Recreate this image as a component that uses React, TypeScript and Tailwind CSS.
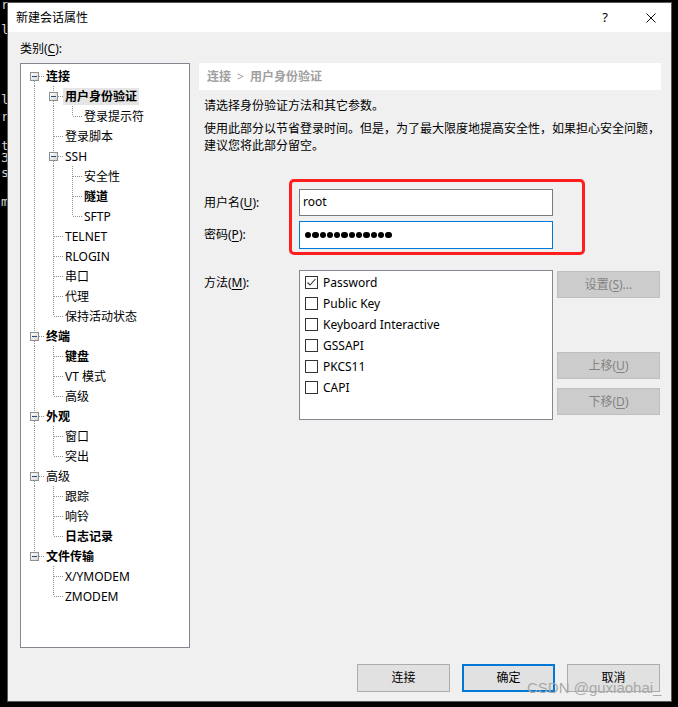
import React from "react";

type TreeNode = { label: string; bold?: boolean; selected?: boolean; children?: TreeNode[] };

const tree: TreeNode[] = [
  {
    label: "连接",
    bold: true,
    children: [
      { label: "用户身份验证", bold: true, selected: true, children: [{ label: "登录提示符" }] },
      { label: "登录脚本" },
      {
        label: "SSH",
        children: [{ label: "安全性" }, { label: "隧道", bold: true }, { label: "SFTP" }],
      },
      { label: "TELNET" },
      { label: "RLOGIN" },
      { label: "串口" },
      { label: "代理" },
      { label: "保持活动状态" },
    ],
  },
  {
    label: "终端",
    bold: true,
    children: [{ label: "键盘", bold: true }, { label: "VT 模式" }, { label: "高级" }],
  },
  { label: "外观", bold: true, children: [{ label: "窗口" }, { label: "突出" }] },
  {
    label: "高级",
    children: [{ label: "跟踪" }, { label: "响铃" }, { label: "日志记录", bold: true }],
  },
  { label: "文件传输", bold: true, children: [{ label: "X/YMODEM" }, { label: "ZMODEM" }] },
];

type Row = {
  node: TreeNode;
  depth: number;
  ancestorsLast: boolean[];
  isLast: boolean;
  isFirstRoot: boolean;
};

function flatten(nodes: TreeNode[], depth: number, ancestorsLast: boolean[], out: Row[]) {
  nodes.forEach((n, i) => {
    const isLast = i === nodes.length - 1;
    out.push({ node: n, depth, ancestorsLast, isLast, isFirstRoot: depth === 0 && i === 0 });
    if (n.children) flatten(n.children, depth + 1, [...ancestorsLast, isLast], out);
  });
}

const rows: Row[] = [];
flatten(tree, 0, [], rows);

const DOT = "#8f8f8f";

function GuideCell({ row, col }: { row: Row; col: number }) {
  const own = col === row.depth;
  const hasBox = own && !!row.node.children;
  // vertical line through an ancestor column
  const passThrough = !own && !row.ancestorsLast[col];
  const top = own && !row.isFirstRoot;
  const bottom = own && !row.isLast;
  return (
    <svg width="19" height="20" className="shrink-0">
      {passThrough && <line x1="9.5" y1="0" x2="9.5" y2="20" stroke={DOT} strokeDasharray="1 1" />}
      {top && <line x1="9.5" y1="0" x2="9.5" y2={hasBox ? 6 : 10} stroke={DOT} strokeDasharray="1 1" />}
      {bottom && <line x1="9.5" y1={hasBox ? 15 : 10} x2="9.5" y2="20" stroke={DOT} strokeDasharray="1 1" />}
      {own && <line x1={hasBox ? 14 : 10} y1="10.5" x2="19" y2="10.5" stroke={DOT} strokeDasharray="1 1" />}
      {hasBox && (
        <g>
          <defs>
            <linearGradient id="exp" x1="0" y1="0" x2="1" y2="1">
              <stop offset="0" stopColor="#ffffff" />
              <stop offset="1" stopColor="#d4d4d4" />
            </linearGradient>
          </defs>
          <rect x="5.5" y="6.5" width="8" height="8" fill="url(#exp)" stroke="#8e8f8f" />
          <line x1="7" y1="10.5" x2="12" y2="10.5" stroke="#2c4c7c" />
        </g>
      )}
    </svg>
  );
}

function TreeRow({ row }: { row: Row }) {
  const cells = [];
  for (let c = 0; c <= row.depth; c++) cells.push(<GuideCell key={c} row={row} col={c} />);
  return (
    <div className="flex h-[20px] items-center">
      {cells}
      <span
        className={`h-[17px] whitespace-nowrap px-[2px] leading-[17px] text-black ${
          row.node.bold ? "font-bold" : ""
        } ${row.node.selected ? "bg-[#e5e5e5]" : ""}`}
      >
        {row.node.label}
      </span>
    </div>
  );
}

function Checkbox({ checked }: { checked?: boolean }) {
  return (
    <svg width="13" height="13" className="shrink-0">
      <rect x="0.5" y="0.5" width="12" height="12" fill="#fff" stroke="#333333" />
      {checked && <path d="M2.5 6.5 L5 9 L10.5 3" fill="none" stroke="#333333" strokeWidth="1.1" />}
    </svg>
  );
}

function DisabledButton({ children, className }: { children: React.ReactNode; className?: string }) {
  return (
    <div
      className={`flex h-[27px] w-[103px] items-center justify-center border border-[#bfbfbf] bg-[#cccccc] text-[#838383] ${
        className ?? ""
      }`}
    >
      {children}
    </div>
  );
}

const methods = [
  { label: "Password", checked: true },
  { label: "Public Key" },
  { label: "Keyboard Interactive" },
  { label: "GSSAPI" },
  { label: "PKCS11" },
  { label: "CAPI" },
];

// bits of the terminal peeking out from behind the dialog
const terminalChars = [
  { ch: "r", top: -1 },
  { ch: "l", top: 24 },
  { ch: "l", top: 94 },
  { ch: "r", top: 111 },
  { ch: "t", top: 140 },
  { ch: "3", top: 152 },
  { ch: "s", top: 167 },
  { ch: "m", top: 196 },
];

export default function App() {
  return (
    <div className="relative flex h-[707px] w-[678px] overflow-hidden bg-black pl-[7px] pt-[2px] font-['Noto_Sans','Noto_Sans_CJK_SC',sans-serif] text-[12px] text-black">
      <div className="absolute left-0 top-0 h-full w-[7px] overflow-hidden font-['DejaVu_Sans_Mono',monospace] text-[13px] leading-[12px] text-[#d0d0d0]">
        {terminalChars.map((t, i) => (
          <span key={i} className="absolute left-[1px]" style={{ top: t.top }}>
            {t.ch}
          </span>
        ))}
      </div>

      <div className="flex h-[700px] w-[665px] flex-col border border-[#5a5a5a] bg-[#f0f0f0]">
        {/* title bar */}
        <div className="flex h-[29px] shrink-0 items-center bg-white">
          <span className="pl-[8px] leading-[16px]">新建会话属性</span>
          <div className="ml-auto flex h-full items-center">
            <div className="flex h-full w-[52px] items-center justify-center text-[13px]">?</div>
            <div className="flex h-full w-[40px] items-center justify-center">
              <svg width="10" height="10">
                <path d="M0.5 0.5 L9.5 9.5 M9.5 0.5 L0.5 9.5" stroke="#111" strokeWidth="1" />
              </svg>
            </div>
          </div>
        </div>

        {/* body */}
        <div className="flex flex-1 flex-col pl-[12px] pt-[9px]">
          <div className="h-[16px] leading-[16px]">
            类别(<span className="underline underline-offset-2">C</span>):
          </div>

          <div className="mt-[6px] flex">
            {/* category tree */}
            <div className="h-[585px] w-[170px] shrink-0 border border-[#828790] bg-white pl-[4px] pt-[2px]">
              {rows.map((r, i) => (
                <TreeRow key={i} row={r} />
              ))}
            </div>

            {/* right panel */}
            <div className="relative ml-[9px] w-[462px]">
              <div className="flex h-[27px] items-center bg-white pl-[8px] font-bold text-[#a0a0a0]">
                连接<span className="mx-[6px] font-normal">&gt;</span>用户身份验证
              </div>
              <p className="mt-[8px] pl-[5px] leading-[16px]">请选择身份验证方法和其它参数。</p>
              <p className="mt-[6px] whitespace-nowrap pl-[5px] leading-[17px]">
                使用此部分以节省登录时间。但是，为了最大限度地提高安全性，如果担心安全问题，
                <br />
                建议您将此部分留空。
              </p>

              <div className="mt-[35px] flex h-[27px] items-center">
                <div className="w-[100px] pl-[5px]">
                  用户名(<span className="underline underline-offset-2">U</span>):
                </div>
                <div className="flex h-full w-[254px] items-center border border-[#7a7a7a] bg-white pb-[1px] pl-[3px]">
                  root
                </div>
              </div>
              <div className="mt-[5px] flex h-[28px] items-center">
                <div className="w-[100px] pl-[5px]">
                  密码(<span className="underline underline-offset-2">P</span>):
                </div>
                <div className="flex h-full w-[254px] items-center gap-[1px] border border-[#0078d7] bg-white pl-[5px]">
                  {Array.from({ length: 12 }).map((_, i) => (
                    <div key={i} className="h-[6.3px] w-[6.3px] rounded-full bg-black" />
                  ))}
                </div>
              </div>

              <div className="mt-[21px] flex">
                <div className="w-[100px] pl-[5px] pt-[5px] leading-[16px]">
                  方法(<span className="underline underline-offset-2">M</span>):
                </div>
                <div className="h-[150px] w-[254px] border border-[#828790] bg-white pl-[5px] pt-[1px]">
                  {methods.map((m) => (
                    <div key={m.label} className="flex h-[21px] items-center gap-[5px]">
                      <Checkbox checked={m.checked} />
                      <span className="leading-[16px]">{m.label}</span>
                    </div>
                  ))}
                </div>
                <div className="ml-[4px] flex flex-col pt-[1px]">
                  <DisabledButton>
                    设置(<span className="underline underline-offset-2">S</span>)...
                  </DisabledButton>
                  <DisabledButton className="mt-[54px]">
                    上移(<span className="underline underline-offset-2">U</span>)
                  </DisabledButton>
                  <DisabledButton className="mt-[9px]">
                    下移(<span className="underline underline-offset-2">D</span>)
                  </DisabledButton>
                </div>
              </div>

              {/* red annotation box */}
              <div className="absolute left-[90px] top-[116px] h-[76px] w-[296px] rounded-[5px] border-[3px] border-[#ff1f1f]" />
            </div>
          </div>

          {/* bottom buttons */}
          <div className="mt-[16px] flex justify-end gap-[12px] pr-[11px]">
            <div className="flex h-[28px] w-[93px] items-center justify-center border border-[#adadad] bg-[#e1e1e1]">
              连接
            </div>
            <div className="flex h-[28px] w-[93px] items-center justify-center border-2 border-[#0078d7] bg-[#e1e1e1]">
              确定
            </div>
            <div className="flex h-[28px] w-[93px] items-center justify-center border border-[#adadad] bg-[#e1e1e1]">
              取消
            </div>
          </div>
        </div>
      </div>

      {/* watermark */}
      <div className="pointer-events-none absolute left-[527px] top-[678px] whitespace-nowrap font-['Liberation_Sans','Noto_Sans_CJK_SC',sans-serif] text-[15px] leading-[20px] text-[#a8a8a8]">
        CSDN @guxiaohai_
      </div>
    </div>
  );
}
